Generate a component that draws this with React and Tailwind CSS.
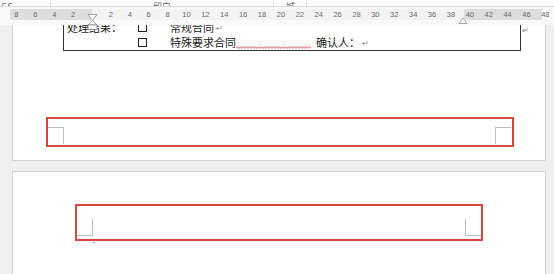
import React from 'react';

const rulerNums = [8, 6, 4, 2, null, 2, 4, 6, 8, 10, 12, 14, 16, 18, 20, 22, 24, 26, 28, 30, 32, 34, 36, 38, 40, 42, 44, 46, 48];

function Hourglass() {
  return (
    <svg width="11" height="16" viewBox="0 0 11 16" className="absolute left-[4px] top-[-1px]">
      <path d="M1 0.5 H10 L5.5 6.5 Z" fill="#fff" stroke="#888" strokeWidth="0.8" />
      <path d="M5.5 6.5 L10 11 H1 Z" fill="#fff" stroke="#888" strokeWidth="0.8" />
      <rect x="1" y="11" width="9" height="4.5" fill="#fff" stroke="#888" strokeWidth="0.8" />
    </svg>
  );
}

function Checkbox() {
  return <span className="inline-block w-[9px] h-[9px] border-[1.3px] border-[#222] shrink-0" />;
}

function Para() {
  return <span className="text-[8px] leading-none text-[#888] ml-[2px]">↵</span>;
}

export default function App() {
  return (
    <div className="w-[554px] h-[274px] overflow-hidden bg-[#efefef] flex flex-col" style={{ fontFamily: '"Noto Sans CJK SC", "Liberation Sans", sans-serif' }}>
      {/* ribbon bottom edge */}
      <div className="h-[7px] shrink-0 bg-white border-b border-[#d9d9d9] flex items-end overflow-hidden text-[9px] leading-[10px] text-[#666]">
        <span className="w-[50px] shrink-0 pl-[1px] -mb-[6px]">GS</span>
        <span className="w-px h-[7px] bg-[#e2e2e2] shrink-0" />
        <span className="w-[222px] shrink-0 pl-[102px] -mb-[6px]">留白</span>
        <span className="w-px h-[7px] bg-[#e2e2e2] shrink-0" />
        <span className="w-[32px] shrink-0 pl-[12px] -mb-[6px]">城</span>
        <span className="w-px h-[7px] bg-[#e2e2e2] shrink-0" />
      </div>

      {/* ruler */}
      <div className="h-[18px] shrink-0 bg-[#f9f9f9] pt-[2px]">
        <div className="ml-[7px] w-[540px] h-[11px] relative flex items-center bg-[linear-gradient(to_right,transparent_3px,#dddddd_3px,#dddddd_85px,#f3f3f3_85px,#f3f3f3_457px,#dddddd_457px,#dddddd_535px,transparent_535px)]" style={{ fontFamily: '"Liberation Sans", sans-serif' }}>
          {rulerNums.map((n, i) => (
            <span key={i} className="w-[18.9px] shrink-0 text-center text-[7.5px] leading-none text-[#6a6a6a] relative">
              {n === null ? <Hourglass /> : n}
            </span>
          ))}
          <svg width="10" height="7" viewBox="0 0 10 7" className="absolute left-[451px] top-[8px]">
            <path d="M1 6.5 L5 1 L9 6.5 Z" fill="#fff" stroke="#888" strokeWidth="0.8" />
          </svg>
        </div>
      </div>

      {/* page 1 (bottom part) */}
      <div className="ml-[12px] w-[534px] h-[136px] shrink-0 bg-white border-x border-b border-[#d5d5d5] overflow-hidden flex flex-col">
        <div className="flex items-start mt-[-5px]">
          <div className="ml-[50px] w-[458px] border-x-[1.5px] border-b-[1.5px] border-[#333] text-[11px] text-[#222] pl-[3px]">
            <div className="h-[15px] flex items-center">
              <span className="w-[71px] shrink-0 leading-none">处理结果：</span>
              <Checkbox />
              <span className="ml-[23px] leading-none">常规合同</span>
              <Para />
            </div>
            <div className="h-[15px] flex items-center">
              <span className="w-[71px] shrink-0" />
              <Checkbox />
              <span className="ml-[23px] leading-none">特殊要求合同</span>
              <svg width="75" height="3" viewBox="0 0 75 3" className="self-end mb-[1px] shrink-0">
                <polyline points="0,2.5 1.5,0.5 3,2.5 4.5,0.5 6,2.5 7.5,0.5 9,2.5 10.5,0.5 12,2.5 13.5,0.5 15,2.5 16.5,0.5 18,2.5 19.5,0.5 21,2.5 22.5,0.5 24,2.5 25.5,0.5 27,2.5 28.5,0.5 30,2.5 31.5,0.5 33,2.5 34.5,0.5 36,2.5 37.5,0.5 39,2.5 40.5,0.5 42,2.5 43.5,0.5 45,2.5 46.5,0.5 48,2.5 49.5,0.5 51,2.5 52.5,0.5 54,2.5 55.5,0.5 57,2.5 58.5,0.5 60,2.5 61.5,0.5 63,2.5 64.5,0.5 66,2.5 67.5,0.5 69,2.5 70.5,0.5 72,2.5 73.5,0.5 75,2.5" fill="none" stroke="#e05a5a" strokeWidth="0.9" />
              </svg>
              <span className="ml-[5px] leading-none">确认人：</span>
              <Para />
            </div>
          </div>
          <span className="mt-[6px] text-[8px] leading-none text-[#888] ml-[1px]">↵</span>
        </div>

        <div className="ml-[33px] mt-[66px] w-[468px] h-[30px] shrink-0 border-2 border-[#d9463f] flex justify-between items-start pt-[8px] pr-[1px]">
          <div className="w-[16px] h-[17px] border-t border-r border-[#bfbfbf]" />
          <div className="w-[16px] h-[17px] border-t border-l border-[#bfbfbf]" />
        </div>
      </div>

      {/* page 2 (top part) */}
      <div className="ml-[12px] mt-[10px] w-[534px] flex-1 bg-white border-x border-t border-[#d5d5d5] flex flex-col">
        <div className="ml-[62px] mt-[32px] w-[408px] h-[37px] shrink-0 border-2 border-[#d9463f] flex justify-between items-start pt-[13px] relative">
          <div className="w-[16px] h-[17px] border-b border-r border-[#bfbfbf]" />
          <div className="w-[16px] h-[17px] border-b border-l border-[#bfbfbf]" />
          <span className="absolute left-[15px] top-[33px] text-[7px] leading-none text-[#999]">+</span>
        </div>
      </div>
    </div>
  );
}
